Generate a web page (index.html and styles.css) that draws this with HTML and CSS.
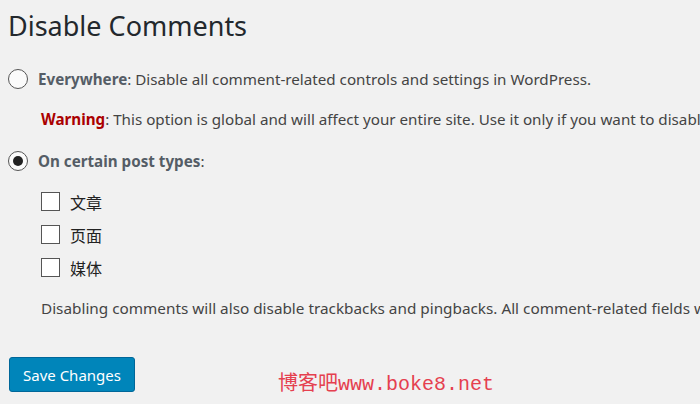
FILE: index.html
```html
<!DOCTYPE html>
<html lang="en">
  <head>
    <meta charset="UTF-8" />
    <title>Disable Comments</title>
    <link rel="stylesheet" href="styles.css">
  </head>
  <body>
    <div class="wrap">
      <h1>Disable Comments</h1>

      <div class="option first">
        <span class="radio"></span>
        <p><strong>Everywhere</strong>: Disable all comment-related controls and settings in WordPress.</p>
      </div>
      <p class="indent warning-line"><strong class="warning">Warning</strong>: This option is global and will affect your entire site. Use it only if you want to disable comments everywhere.</p>

      <div class="option second">
        <span class="radio checked"></span>
        <p><strong>On certain post types</strong>:</p>
      </div>

      <ul class="types">
        <li><span class="box"></span>文章</li>
        <li><span class="box"></span>页面</li>
        <li><span class="box"></span>媒体</li>
      </ul>

      <p class="indent note">Disabling comments will also disable trackbacks and pingbacks. All comment-related fields will also be hidden from the edit/quick-edit screens of the affected posts.</p>

      <div class="footer">
        <button class="save">Save Changes</button>
        <span class="mark">博客吧www.boke8.net</span>
      </div>
    </div>
  </body>
</html>
```

FILE: styles.css
```css
body {
  margin: 0;
  background-color: #f1f1f1;
  font-family: "Noto Sans", "Noto Sans CJK SC", sans-serif;
  color: #444;
  overflow: hidden;
}

.wrap {
  padding: 9px 8px 0;
  white-space: nowrap;
}

h1 {
  margin: 0;
  font-size: 27px;
  font-weight: 400;
  color: #23282d;
  line-height: 34px;
}

p {
  margin: 0;
}

.option {
  display: flex;
  align-items: center;
  gap: 10px;
  height: 20px;
  font-size: 15.2px;
  line-height: 20px;
}

.option.first {
  margin-top: 26px;
}

.option.second {
  margin-top: 22px;
}

.option strong {
  color: #555d66;
}

.radio {
  width: 18px;
  height: 18px;
  border: 1px solid #555;
  border-radius: 50%;
  background-color: #fbfbfb;
  display: flex;
  align-items: center;
  justify-content: center;
  flex-shrink: 0;
}

.radio.checked::after {
  content: "";
  width: 10px;
  height: 10px;
  border-radius: 50%;
  background-color: #222;
}

.indent {
  padding-left: 33px;
  font-size: 15.2px;
  line-height: 20px;
}

.warning-line {
  margin-top: 20px;
}

.warning {
  color: #a00;
}

.types {
  list-style: none;
  margin: 21px 0 0;
  padding: 0 0 0 33px;
  display: flex;
  flex-direction: column;
  gap: 14px;
}

.types li {
  display: flex;
  align-items: center;
  gap: 10px;
  height: 19px;
  font-size: 16px;
  color: #222;
}

.box {
  width: 17px;
  height: 17px;
  border: 1px solid #555;
  background-color: #fff;
}

.note {
  margin-top: 21px;
  font-size: 15.3px;
}

.footer {
  display: flex;
  align-items: flex-end;
  margin-top: 39px;
}

.save {
  background-color: #0085ba;
  border: 1px solid #006799;
  border-radius: 3px;
  color: #fff;
  font-family: inherit;
  font-size: 15px;
  height: 35px;
  padding: 0 13px;
  margin-left: 1px;
}

.mark {
  margin-left: 143px;
  margin-bottom: -4px;
  color: #e5404f;
  font-family: "Liberation Mono", "Noto Sans CJK SC", monospace;
  font-size: 20px;
}
```
